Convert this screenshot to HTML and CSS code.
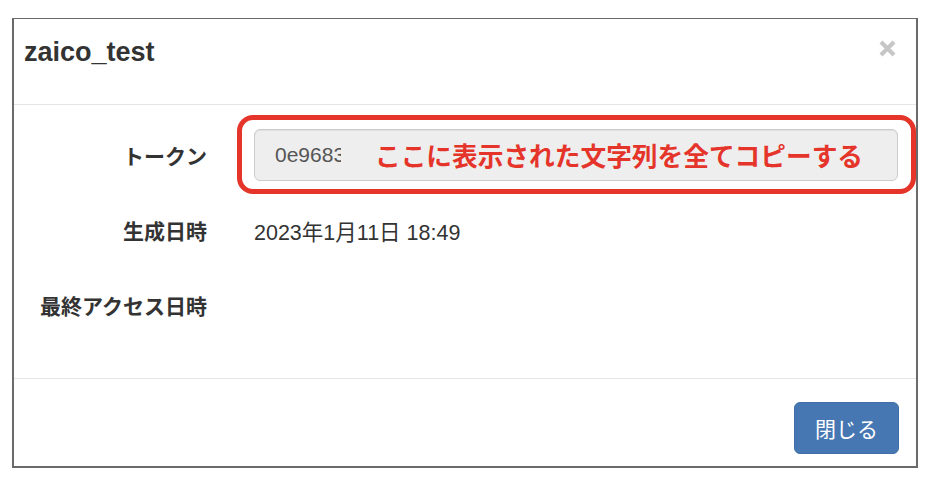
FILE: index.html
```html
<!DOCTYPE html>
<html lang="ja">
<head>
<meta charset="utf-8">
<title>zaico_test</title>
<link rel="stylesheet" href="styles.css">
</head>
<body>
<div class="modal">
  <div class="modal-header">
    <h4 class="modal-title">zaico_test</h4>
    <button class="close" type="button" aria-label="Close">
      <svg width="17" height="17" viewBox="0 0 17 17"><path d="M2 2 L15 15 M15 2 L2 15" stroke="#c6c6c6" stroke-width="4.2" fill="none"/></svg>
    </button>
  </div>
  <div class="modal-body">
    <div class="form-row">
      <div class="label">トークン</div>
      <div class="token-wrap">
        <div class="token-field">
          <span class="token-value">0e9683</span>
          <span class="note">ここに表示された文字列を全てコピーする</span>
        </div>
        <div class="highlight"></div>
      </div>
    </div>
    <div class="form-row">
      <div class="label">生成日時</div>
      <div class="value">2023年1月11日 18:49</div>
    </div>
    <div class="form-row">
      <div class="label">最終アクセス日時</div>
      <div class="value"></div>
    </div>
  </div>
  <div class="modal-footer">
    <button class="btn-primary" type="button">閉じる</button>
  </div>
</div>
</body>
</html>
```
FILE: styles.css
```css
html, body {
  margin: 0;
  padding: 0;
  background: #ffffff;
}
body {
  font-family: "Liberation Sans", "Noto Sans CJK JP", sans-serif;
  color: #333333;
}
.modal {
  box-sizing: border-box;
  width: 906px;
  margin: 18px 0 0 12px;
  border-style: solid;
  border-color: #6a6a6a;
  border-width: 1px 2px 2px 2px;
  background: #ffffff;
}
.modal-header {
  box-sizing: border-box;
  height: 86px;
  display: flex;
  justify-content: space-between;
  align-items: flex-start;
  padding: 18px 20px 0 10px;
  border-bottom: 1px solid #e5e5e5;
}
.modal-title {
  margin: 0;
  font-family: "Liberation Sans", sans-serif;
  font-size: 27px;
  line-height: 30px;
  font-weight: 700;
  color: #333333;
}
.close {
  margin-top: 3px;
  padding: 0;
  border: 0;
  background: transparent;
  width: 17px;
  height: 17px;
  display: flex;
}
.modal-body {
  padding: 24px 18px 47px 0;
  display: flex;
  flex-direction: column;
  gap: 23px;
}
.form-row {
  display: grid;
  grid-template-columns: 193px 1fr;
  column-gap: 47px;
  align-items: center;
  height: 52px;
}
.label {
  text-align: right;
  font-family: "Noto Sans CJK JP", sans-serif;
  font-weight: 700;
  font-size: 21px;
  color: #333333;
}
.value {
  font-size: 21.5px;
  color: #333333;
}
.token-wrap {
  position: relative;
  height: 52px;
}
.token-field {
  box-sizing: border-box;
  height: 52px;
  display: flex;
  align-items: center;
  padding-left: 20px;
  background: #eeeeee;
  border: 1px solid #cccccc;
  border-radius: 6px;
  box-shadow: inset 0 1px 1px rgba(0,0,0,0.06);
  position: relative;
}
.token-value {
  display: block;
  width: 66px;
  overflow: hidden;
  white-space: nowrap;
  font-size: 21px;
  color: #555555;
}
.note {
  position: absolute;
  left: 120px;
  top: 50%;
  transform: translateY(-52%);
  font-family: "Noto Sans CJK JP", sans-serif;
  font-weight: 700;
  font-size: 25.7px;
  color: #e5352b;
  white-space: nowrap;
}
.highlight {
  position: absolute;
  top: -14px;
  left: -17px;
  right: -18px;
  bottom: -13px;
  border: 5px solid #e5352b;
  border-radius: 16px;
  pointer-events: none;
}
.modal-footer {
  display: flex;
  justify-content: flex-end;
  padding: 23px 17px 12px 0;
  border-top: 1px solid #e5e5e5;
}
.btn-primary {
  box-sizing: border-box;
  width: 105px;
  height: 52px;
  border: 1px solid #3f6fa6;
  border-radius: 6px;
  background: #4677b2;
  color: #ffffff;
  font-family: "Noto Sans CJK JP", sans-serif;
  font-size: 21px;
  padding: 0;
}
```
